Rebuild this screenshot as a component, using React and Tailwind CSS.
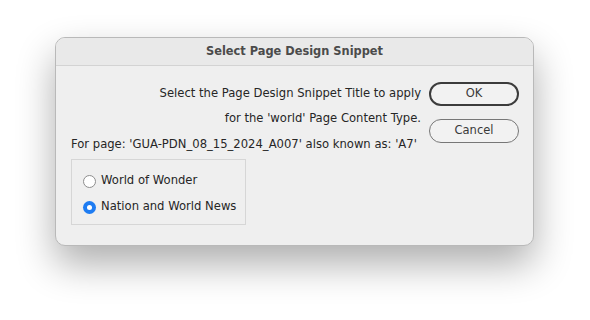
export default function App() {
  const font = { fontFamily: '"DejaVu Sans", Verdana, sans-serif' };
  return (
    <div className="w-[590px] h-[320px] bg-white pt-[37px] pl-[55px]" style={font}>
      <div className="w-[479px] h-[209px] rounded-[10px] bg-[#efefef] border border-[#b9b9b9] shadow-[0_18px_38px_rgba(0,0,0,0.32)] overflow-hidden">
        {/* title bar */}
        <div className="h-[28px] bg-[#e9e9e9] border-b border-[#d3d3d3] flex items-center justify-center">
          <span className="text-[11.4px] font-bold text-[#4b4b4b]">Select Page Design Snippet</span>
        </div>

        {/* body */}
        <div className="flex pl-[15px] pt-[16px] gap-[8px]">
          <div className="w-[350px] flex flex-col text-[11.6px] text-[#262626]">
            <div className="h-[24px] flex items-center justify-end">Select the Page Design Snippet Title to apply</div>
            <div className="h-[26px] flex items-center justify-end">for the 'world' Page Content Type.</div>
            <div className="h-[25px] flex items-center">For page: 'GUA-PDN_08_15_2024_A007' also known as: 'A7'</div>
            <div className="mt-[2px] w-[175px] h-[66px] border border-[#d6d6d6] flex flex-col pl-[11px] pt-[8px]">
              <label className="h-[26px] flex items-center gap-[5px]">
                <span className="w-[13px] h-[13px] rounded-full border border-[#8e8e8e] bg-white" />
                <span>World of Wonder</span>
              </label>
              <label className="h-[26px] flex items-center gap-[5px]">
                <span className="w-[13px] h-[13px] rounded-full bg-[#1e7cf2] flex items-center justify-center">
                  <span className="w-[5px] h-[5px] rounded-full bg-white" />
                </span>
                <span>Nation and World News</span>
              </label>
            </div>
          </div>

          <div className="flex flex-col gap-[13px]">
            <button className="w-[90px] h-[24px] rounded-full border-2 border-[#3c3c3c] bg-[#f2f2f2] text-[11.5px] text-[#3a3a3a]">
              OK
            </button>
            <button className="w-[90px] h-[24px] rounded-full border border-[#777] bg-[#f2f2f2] text-[11.5px] text-[#3a3a3a]">
              Cancel
            </button>
          </div>
        </div>
      </div>
    </div>
  );
}
